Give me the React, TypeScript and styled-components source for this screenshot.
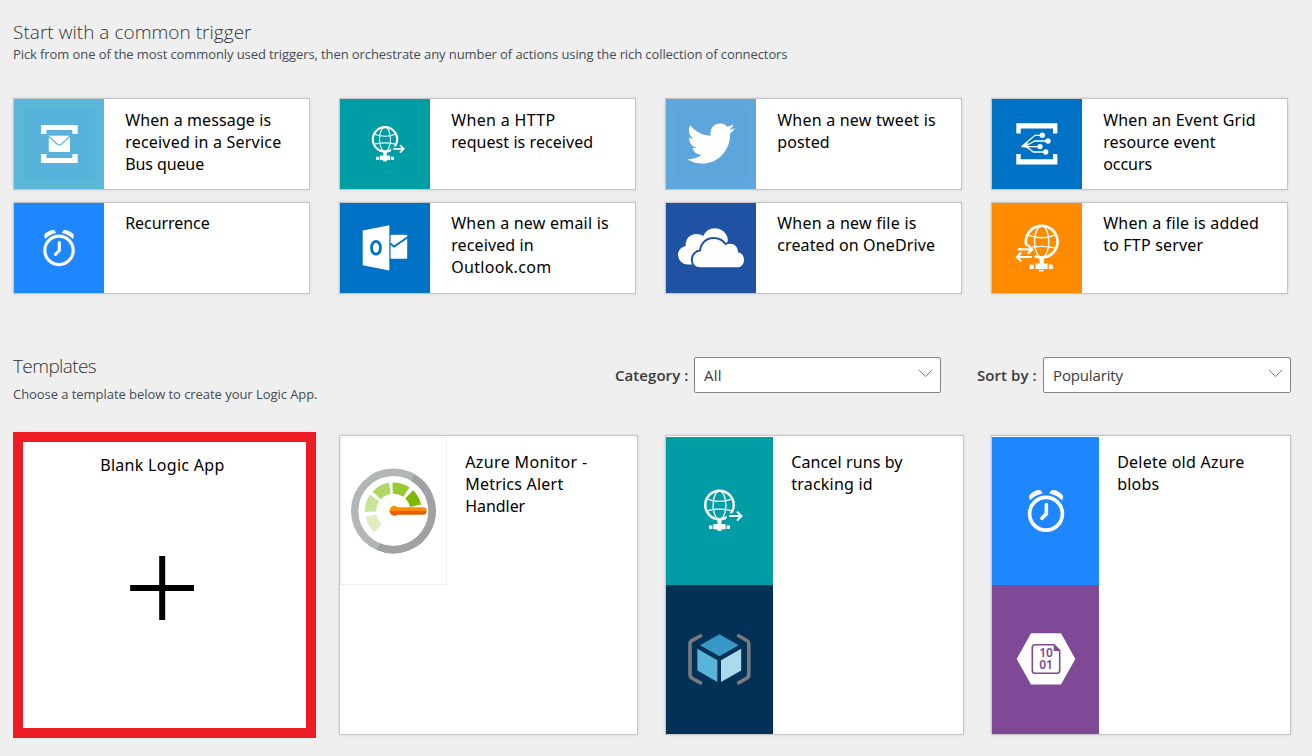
import React from "react";
import styled, { createGlobalStyle } from "styled-components";

const GlobalStyle = createGlobalStyle`
  *, *::before, *::after { box-sizing: border-box; }
  body {
    margin: 0;
    background: #efefef;
    color: #000;
    font-family: "Open Sans", "Noto Sans", sans-serif;
    overflow: hidden;
  }
  h2, h3, p { margin: 0; font-weight: 400; }
`;

const Page = styled.main`
  width: 1312px;
  height: 756px;
  padding: 18px 0 0 13px;
  background: #efefef;
`;

const SectionTitle = styled.h2<{ $tracking?: number }>`
  font-size: 19px;
  font-weight: 300;
  line-height: 28px;
  color: #333;
  white-space: nowrap;
  letter-spacing: ${(p) => p.$tracking ?? 0}px;
`;

const SectionHint = styled.p<{ $tracking?: number }>`
  font-size: 13px;
  line-height: 18px;
  color: #454b55;
  white-space: nowrap;
  letter-spacing: ${(p) => p.$tracking ?? 0}px;
`;

const TriggerIntro = styled.div`
  height: 46px;

  ${SectionHint} { line-height: 16px; }
`;

const TriggerGrid = styled.div`
  display: grid;
  grid-template-columns: repeat(4, 297px);
  column-gap: 29px;
  row-gap: 11.5px;
  margin-top: 34.4px;
`;

const TriggerCard = styled.article`
  display: flex;
  height: 92px;
  background: #fff;
  border: 1px solid #c6c6c6;
  box-shadow: 0 0 3px rgba(0, 0, 0, 0.12);
`;

const TriggerTile = styled.div<{ $color: string }>`
  flex: none;
  width: 90px;
  height: 90px;
  background: ${(p) => p.$color};

  svg { display: block; width: 90px; height: 90px; }
`;

const CardText = styled.h3`
  padding: 9.2px 0 0 21.2px;
  font-family: "Noto Sans", sans-serif;
  font-size: 16px;
  line-height: 22px;
  white-space: nowrap;
`;

const Line = styled.span<{ $tracking: number }>`
  display: block;
  letter-spacing: ${(p) => p.$tracking}px;
`;

const TemplatesHeader = styled.header`
  display: flex;
  margin-top: 58.1px;
  height: 83px;
`;

const TemplatesIntro = styled.div`
  width: 602px;

  ${SectionHint} { margin-top: 5px; }
`;

const Filter = styled.div<{ $offset?: number }>`
  display: flex;
  align-items: center;
  height: 36px;
  margin: 5px 0 0 ${(p) => p.$offset ?? 0}px;
`;

const FilterLabel = styled.label<{ $width: number }>`
  width: ${(p) => p.$width}px;
  font-size: 15px;
  font-weight: 600;
  line-height: 20px;
  color: #3a3a3a;
  letter-spacing: 0.06px;
  white-space: nowrap;
`;

const Select = styled.div<{ $width: number; $tracking: number }>`
  display: flex;
  align-items: center;
  justify-content: space-between;
  width: ${(p) => p.$width}px;
  height: 36px;
  padding: 0 7px 0 9px;
  border: 1px solid #858585;
  border-radius: 2px;
  background: #fff;
  color: #3a3a3a;
  font-size: 15px;
  letter-spacing: ${(p) => p.$tracking}px;

  svg { width: 15px; height: 9px; margin-top: -3px; }
`;

const TemplateGrid = styled.div`
  display: grid;
  grid-template-columns: 299px 299px 299px 300px;
  column-gap: 27px;
`;

const BlankCard = styled.article`
  display: flex;
  flex-direction: column;
  align-items: center;
  width: 303px;
  height: 306px;
  margin-top: -3px;
  padding: 12px 5px 0 0;
  border: 10px solid #ed1c24;
  background: #fff;

  svg { width: 64px; height: 64px; margin-top: 80px; }
`;

const BlankTitle = styled.h3`
  padding-left: 0.8px;
  font-family: "Noto Sans", sans-serif;
  font-size: 16px;
  line-height: 22px;
  letter-spacing: 0.295px;
`;

const TemplateCard = styled.article`
  display: flex;
  height: 300px;
  padding-top: 1px;
  background: #fff;
  border: 1px solid #c6c6c6;
  box-shadow: 0 0 3px rgba(0, 0, 0, 0.12);

  ${CardText} { padding: 14px 0 0 18.2px; }
`;

const TileStack = styled.div`
  flex: none;
  width: 107px;
`;

const TemplateTile = styled.div<{ $color: string; $height: number; $framed?: boolean }>`
  display: flex;
  align-items: center;
  justify-content: center;
  overflow: hidden;
  width: 107px;
  height: ${(p) => p.$height}px;
  background: ${(p) => p.$color};
  box-shadow: ${(p) => (p.$framed ? "inset 0 0 0 1px #f0f0f0" : "none")};

  svg { flex: none; display: block; }
`;

const BracketPair = ({ x1, x2, y1, y2, bar, leg, reach }: Record<"x1" | "x2" | "y1" | "y2" | "bar" | "leg" | "reach", number>) => (
  <g fill="#fff">
    <path d={`M${x1} ${y1}H${x2}V${y1 + reach}H${x2 - leg}V${y1 + bar}H${x1 + leg}V${y1 + reach}H${x1}Z`} />
    <path d={`M${x1} ${y2}H${x2}V${y2 - reach}H${x2 - leg}V${y2 - bar}H${x1 + leg}V${y2 - reach}H${x1}Z`} />
  </g>
);

const ServiceBusIcon = () => (
  <svg viewBox="0 0 90 90">
    <rect x="9.5" y="9.5" width="71.5" height="71.5" fill="#57b3da" />
    <BracketPair x1={27} x2={63.7} y1={26} y2={64} bar={5} leg={5.4} reach={9} />
    <rect x="34.8" y="36.7" width="21.2" height="16.2" fill="#fff" />
    <path d="M34.6 37 43 45q2.4 2 4.8 0L56.2 37" fill="none" stroke="#59b4d9" strokeWidth="1.1" />
  </svg>
);

const Globe = () => (
  <g fill="none" stroke="#fff">
    <circle cx="45" cy="40.3" r="12.2" strokeWidth="2.1" />
    <ellipse cx="45" cy="40.3" rx="5.5" ry="12" strokeWidth="1.1" />
    <path d="M34.6 35.2q10.4 4 20.8 0M33.6 45.4q11.4-3 22.8 0" strokeWidth="1.1" />
    <path d="M45 52.5v5" strokeWidth="3.4" />
  </g>
);

const HttpIcon = ({ size = 90 }: { size?: number }) => (
  <svg viewBox="0 0 90 90" width={size} height={size}>
    <Globe />
    <path d="M51.8 47.4h8v5.4h-9z" fill="#009da5" />
    <g fill="#fff">
      <rect x="39.7" y="56.6" width="10.5" height="4.5" />
      <rect x="36" y="57.8" width="2.9" height="3" />
      <rect x="51.1" y="57.8" width="2.9" height="3" />
      <rect x="43.2" y="61" width="3.6" height="1.4" />
    </g>
    <path d="M53.2 49.8h10M60 46l3.8 3.8L60 53.7" fill="none" stroke="#fff" strokeWidth="1.7" />
  </svg>
);

const TwitterIcon = () => (
  <svg viewBox="0 0 90 90">
    <rect x="9.5" y="9.5" width="71.5" height="71.5" fill="#5da6dc" />
    <path
      transform="translate(21 19.8) scale(2 2.06)"
      fill="#fff"
      d="M23.953 4.57a10 10 0 01-2.825.775 4.958 4.958 0 002.163-2.723c-.951.555-2.005.959-3.127 1.184a4.92 4.92 0 00-8.384 4.482C7.69 8.095 4.067 6.13 1.64 3.162a4.822 4.822 0 00-.666 2.475c0 1.71.87 3.213 2.188 4.096a4.904 4.904 0 01-2.228-.616v.06a4.923 4.923 0 003.946 4.827 4.996 4.996 0 01-2.212.085 4.936 4.936 0 004.604 3.417 9.867 9.867 0 01-6.102 2.105c-.39 0-.779-.023-1.17-.067a13.995 13.995 0 007.557 2.209c9.053 0 13.998-7.496 13.998-13.985 0-.21 0-.42-.015-.63A9.935 9.935 0 0024 4.59z"
    />
  </svg>
);

const EventGridIcon = () => (
  <svg viewBox="0 0 90 90">
    <BracketPair x1={24.3} x2={65.4} y1={24.2} y2={65.5} bar={5.3} leg={4.4} reach={10.4} />
    <path d="M29.8 47.4 43 36.3h7.3M34 46.8l9-4.8h13M29.8 47.7H48M34.5 47.7l6.8 5.3h12.4" fill="none" stroke="#fff" strokeWidth="1.3" />
    <path d="M29 47.7 36 42l-.8 4 1.6 4.2-2.6-1.8z" fill="#fff" />
    <g fill="#fff">
      <circle cx="50.3" cy="36.3" r="2.7" />
      <circle cx="56" cy="42" r="2.7" />
      <circle cx="48" cy="47.6" r="2.7" />
      <circle cx="53.7" cy="53" r="2.7" />
    </g>
  </svg>
);

const bell = "M30.9 36 30.3 32.6Q30.2 31 32 29.8 36 26.8 39 26.9 40.4 26.9 41 27.9L42.2 29.9Q35.6 31.200 30.9 36Z";

const ClockIcon = ({ size = 90 }: { size?: number }) => (
  <svg viewBox="0 0 90 90" width={size} height={size}>
    <path d={bell} fill="#fff" />
    <path d={bell} fill="#fff" transform="matrix(-1 0 0 1 90 0)" />
    <circle cx="45" cy="47.4" r="14.2" fill="none" stroke="#fff" strokeWidth="3.2" />
    <path d="M45.3 39.5v8l-3.8 3.8" fill="none" stroke="#fff" strokeWidth="3.1" strokeLinecap="round" strokeLinejoin="round" />
  </svg>
);

const OutlookIcon = () => (
  <svg viewBox="0 0 90 90">
    <rect x="50.6" y="31.8" width="16.6" height="24" rx="0.8" fill="#fff" />
    <path d="m50.2 40.6 3.9 3 13.6-9.4" fill="none" stroke="#0072c6" strokeWidth="1.9" />
    <path d="m22.7 27.4 26.6-5.1v45.2l-26.6-5.3z" fill="#fff" />
    <ellipse cx="36" cy="44.8" rx="4.5" ry="6.4" fill="none" stroke="#0072c6" strokeWidth="2.8" />
  </svg>
);

const OneDriveIcon = () => (
  <svg viewBox="0 0 90 90">
    <path d="M22.5 61.5A9.8 9.8 0 0 1 12 52C12 47.5 15 44 19.7 43C19.3 35.5 24 31 30.5 31C33 31 35.5 31.8 37.3 33C39.5 28 43.5 25.200 48.500 25.200C55.5 25.200 60.5 29.5 61.8 36L61 46 34 61.500Z" fill="#fff" />
    <path
      d="M34 64.3C29.5 64.3 26.8 61 26.8 56.8C26.8 52.5 30 48.6 35 48.2C35.5 41 40.5 36 47.3 36C53 36 56.8 38.5 59 42.2C65.5 38.8 72 42 72 49.5C76 49.7 78 53 78 57C78 61 75.5 64.3 71.5 64.3Z"
      fill="#fff"
      stroke="#2052a4"
      strokeWidth="4"
      paintOrder="stroke"
    />
  </svg>
);

const FtpIcon = () => (
  <svg viewBox="0 0 90 90">
    <g transform="translate(-8.8 -13.7) scale(1.3)"><Globe /></g>
    <path d="M22 42.8h15.5l3 2.2 3.4 5.8-3.4 7H22z" fill="#ff8c00" />
    <g fill="#fff">
      <rect x="43.4" y="60.5" width="12.2" height="5.5" />
      <rect x="37.7" y="61.6" width="4" height="4.3" />
      <rect x="56.8" y="61.6" width="4" height="4.3" />
      <rect x="47" y="66.8" width="4.5" height="1.6" />
    </g>
    <path d="M25.8 46.4h14M35.8 42l4.4 4.4-4.4 4.4M25 54h15M29.3 49.6 24.9 54l4.4 4.4" fill="none" stroke="#fff" strokeWidth="2.2" />
  </svg>
);

const polar = (deg: number, r: number) => {
  const a = (deg * Math.PI) / 180;
  return `${(53.4 + r * Math.cos(a)).toFixed(2)} ${(74 + r * Math.sin(a)).toFixed(2)}`;
};
const arc = (from: number, to: number, r: number) =>
  `M${polar(from, r)}A${r} ${r} 0 ${to - from > 180 ? 1 : 0} 1 ${polar(to, r)}`;

const gaugeSegments: [number, number, string][] = [
  [132, 168, "#dfeebf"],
  [178, 214.5, "#c9e499"],
  [223, 261, "#b2d766"],
  [268, 304.6, "#99c833"],
  [313.6, 347, "#7fba00"],
];

const GaugeIcon = () => (
  <svg viewBox="0 0 107 148" width="107" height="148">
    <defs>
      <linearGradient id="needle" x1="0" y1="0" x2="0" y2="1">
        <stop offset="0.5" stopColor="#ff8c00" />
        <stop offset="0.5" stopColor="#e55f00" />
      </linearGradient>
    </defs>
    <g fill="none">
      <circle cx="53.4" cy="74" r="38.7" stroke="#b3b6b6" strokeWidth="7.4" />
      <path d={arc(-60, 113, 38.7)} stroke="#a0a1a2" strokeWidth="7.4" />
      {gaugeSegments.map(([from, to, color]) => (
        <path key={from} d={arc(from, to, 22.9)} stroke={color} strokeWidth="11.2" />
      ))}
    </g>
    <path d="M53.5 68.8a5 5 0 0 1 4 1.5H83a3.7 3.7 0 0 1 0 7.4H57.5a5 5 0 1 1-4-8.9Z" fill="url(#needle)" />
  </svg>
);

const ResourceIcon = () => (
  <svg viewBox="0 0 107 149" width="107" height="149">
    <path d="M53.4 49.3 72.7 60.3 53.4 71.3 34 60.3Z" fill="#3999c6" />
    <path d="M31.4 63.7 51.4 75.2V97L31.4 85.5Z" fill="#59b4d9" />
    <path d="M75.2 63.7 55 75.2V97L75.2 85.5Z" fill="#acd9ec" />
    <path
      d="M34.6 50.8 26.5 55.2Q24 56.6 24 59V89.5Q24 92 26.5 93.5L34.6 97.9M72.5 50.8 80.3 55.2Q82.8 56.6 82.8 59V89.5Q82.8 92 80.3 93.5L72.5 97.9"
      fill="none"
      stroke="#7a7a7a"
      strokeWidth="3.6"
      strokeLinecap="round"
    />
  </svg>
);

const BlobDigits = styled.text`
  font-family: "Noto Sans", sans-serif;
  font-size: 12px;
  font-weight: 600;
  text-anchor: middle;
  fill: #804998;
`;

const BlobIcon = () => (
  <svg viewBox="0 0 107 149" width="107" height="149">
    <path d="M24.7 74 39 48.3H69L83.3 74 69 99.4H39Z" fill="#fff" />
    <path d="M43 59.8H62L67.7 65.5V85.5Q67.7 88.2 65 88.2H43Q40.3 88.2 40.3 85.5V62.5Q40.3 59.8 43 59.8Z" fill="none" stroke="#804998" strokeWidth="1.6" />
    <path d="M61.7 59V66H68.5Z" fill="#804998" />
    <BlobDigits>
      <tspan x="54" y="72.4">10</tspan>
      <tspan x="54" y="84.2">01</tspan>
    </BlobDigits>
  </svg>
);

const PlusIcon = () => (
  <svg viewBox="0 0 64 64">
    <path d="M32.2 0V64M0.200 32H64.200" stroke="#000" strokeWidth="6" />
  </svg>
);

const Chevron = () => (
  <svg viewBox="0 0 15 9">
    <path d="M0.8 0.9 7.5 7.6 14.2 0.9" fill="none" stroke="#777" strokeWidth="1" />
  </svg>
);

type TextLine = [text: string, tracking: number];

const triggers: { color: string; icon: React.ReactNode; lines: TextLine[] }[] = [
  { color: "#59b7d9", icon: <ServiceBusIcon />, lines: [["When a message is", 0.12], ["received in a Service", 0.2], ["Bus queue", -0.1]] },
  { color: "#009da5", icon: <HttpIcon />, lines: [["When a HTTP", 0.34], ["request is received", 0.07]] },
  { color: "#5fa8dd", icon: <TwitterIcon />, lines: [["When a new tweet is", 0.226], ["posted", 0.135]] },
  { color: "#0072c6", icon: <EventGridIcon />, lines: [["When an Event Grid", 0.2], ["resource event", 0.08], ["occurs", -0.04]] },
  { color: "#1e86ff", icon: <ClockIcon />, lines: [["Recurrence", -0.06]] },
  { color: "#0072c6", icon: <OutlookIcon />, lines: [["When a new email is", 0.224], ["received in", 0.12], ["Outlook.com", 0.32]] },
  { color: "#2052a4", icon: <OneDriveIcon />, lines: [["When a new file is", 0.25], ["created on OneDrive", 0.13]] },
  { color: "#ff8c00", icon: <FtpIcon />, lines: [["When a file is added", 0.22], ["to FTP server", 0.19]] },
];

const templates: { tiles: { color: string; height: number; framed?: boolean; icon: React.ReactNode }[]; lines: TextLine[] }[] = [
  {
    tiles: [{ color: "#fff", height: 148, framed: true, icon: <GaugeIcon /> }],
    lines: [["Azure Monitor -", 0.38], ["Metrics Alert", 0.224], ["Handler", -0.05]],
  },
  {
    tiles: [
      { color: "#009da5", height: 148, icon: <HttpIcon size={105} /> },
      { color: "#013157", height: 149, icon: <ResourceIcon /> },
    ],
    lines: [["Cancel runs by", 0.11], ["tracking id", 0.225]],
  },
  {
    tiles: [
      { color: "#1e86ff", height: 148, icon: <ClockIcon size={104} /> },
      { color: "#804998", height: 149, icon: <BlobIcon /> },
    ],
    lines: [["Delete old Azure", 0.24], ["blobs", 0.21]],
  },
];

const Lines = ({ lines }: { lines: TextLine[] }) => (
  <CardText>
    {lines.map(([text, tracking]) => (
      <Line key={text} $tracking={tracking}>{text}</Line>
    ))}
  </CardText>
);

export default function App() {
  return (
    <Page>
      <GlobalStyle />
      <TriggerIntro>
        <SectionTitle $tracking={0.033}>Start with a common trigger</SectionTitle>
        <SectionHint $tracking={-0.091}>
          Pick from one of the most commonly used triggers, then orchestrate any number of actions using the rich collection of connectors
        </SectionHint>
      </TriggerIntro>

      <TriggerGrid>
        {triggers.map((t) => (
          <TriggerCard key={t.lines[0][0]}>
            <TriggerTile $color={t.color}>{t.icon}</TriggerTile>
            <Lines lines={t.lines} />
          </TriggerCard>
        ))}
      </TriggerGrid>

      <TemplatesHeader>
        <TemplatesIntro>
          <SectionTitle $tracking={-0.6}>Templates</SectionTitle>
          <SectionHint $tracking={-0.054}>Choose a template below to create your Logic App.</SectionHint>
        </TemplatesIntro>
        <Filter>
          <FilterLabel $width={79}>Category :</FilterLabel>
          <Select $width={247} $tracking={0.3}>All<Chevron /></Select>
        </Filter>
        <Filter $offset={36}>
          <FilterLabel $width={66}>Sort by :</FilterLabel>
          <Select $width={248} $tracking={-0.147}>Popularity<Chevron /></Select>
        </Filter>
      </TemplatesHeader>

      <TemplateGrid>
        <BlankCard>
          <BlankTitle>Blank Logic App</BlankTitle>
          <PlusIcon />
        </BlankCard>
        {templates.map((t) => (
          <TemplateCard key={t.lines[0][0]}>
            <TileStack>
              {t.tiles.map((tile, i) => (
                <TemplateTile key={i} $color={tile.color} $height={tile.height} $framed={tile.framed}>
                  {tile.icon}
                </TemplateTile>
              ))}
            </TileStack>
            <Lines lines={t.lines} />
          </TemplateCard>
        ))}
      </TemplateGrid>
    </Page>
  );
}
